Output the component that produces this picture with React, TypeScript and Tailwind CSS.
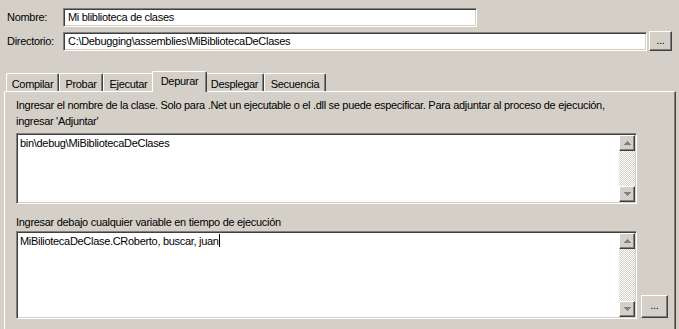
import type { ReactNode } from 'react';

const sunken =
  'border border-t-[#808080] border-l-[#808080] border-r-white border-b-white shadow-[inset_1px_1px_0_#404040,inset_-1px_-1px_0_#d4d0c8]';
const raised =
  'border border-t-white border-l-white border-r-[#404040] border-b-[#404040] shadow-[inset_-1px_-1px_0_#808080]';

function DotsButton({ className }: { className: string }) {
  return (
    <div className={`${raised} ${className} flex items-center justify-center bg-[#d4d0c8] text-[11px] leading-none`}>
      <span className="-mt-[2px]">...</span>
    </div>
  );
}

function Arrow({ up }: { up?: boolean }) {
  return (
    <div className={`${raised} w-[16px] h-[16px] bg-[#d4d0c8] flex items-center justify-center`}>
      <svg width="7" height="4" viewBox="0 0 7 4">
        {up ? (
          <path d="M3 0h1v1h1v1h1v1h1v1H0V3h1V2h1V1h1z" fill="#808080" />
        ) : (
          <path d="M0 0h7v1H6v1H5v1H4v1H3V3H2V2H1V1H0z" fill="#808080" />
        )}
      </svg>
    </div>
  );
}

function TextBox({ className, children }: { className: string; children: ReactNode }) {
  return (
    <div className={`${sunken} ${className} bg-white flex`}>
      <div className="flex-1 pl-[3px] pt-[2px] leading-[14px] whitespace-nowrap">{children}</div>
      <div className="w-[16px] flex flex-col mr-[1px] my-[1px] bg-[repeating-conic-gradient(#d4d0c8_0%_25%,#ffffff_0%_50%)] bg-[length:2px_2px]">
        <Arrow up />
        <div className="flex-1" />
        <Arrow />
      </div>
    </div>
  );
}

const tabs = [
  { label: 'Compilar', w: 'w-[53px]' },
  { label: 'Probar', w: 'w-[44px]' },
  { label: 'Ejecutar', w: 'w-[51px]' },
  { label: 'Depurar', w: 'w-[55px]', active: true },
  { label: 'Desplegar', w: 'w-[59px]' },
  { label: 'Secuencia', w: 'w-[62px]' },
];

export default function App() {
  return (
    <div className="w-[679px] h-[329px] overflow-hidden bg-[#d4d0c8] text-black text-[11px] tracking-[-0.3px] font-['Liberation_Sans',sans-serif]">
      <div className="pl-[7px] pt-[8px] flex flex-col gap-[4px]">
        <div className="flex items-center">
          <span className="w-[56px]">Nombre:</span>
          <div className={`${sunken} w-[414px] h-[19px] bg-white pl-[4px] leading-[16px]`}>Mi bliblioteca de clases</div>
        </div>
        <div className="flex items-center">
          <span className="w-[56px]">Directorio:</span>
          <div className={`${sunken} w-[584px] h-[19px] bg-white pl-[4px] leading-[16px]`}>
            C:\Debugging\assemblies\MiBibliotecaDeClases
          </div>
          <DotsButton className="ml-[2px] w-[23px] h-[20px]" />
        </div>
      </div>

      <div className="mt-[20px] pl-[6px] flex items-end h-[20px] relative z-10">
        {tabs.map((t) =>
          t.active ? (
            <div
              key={t.label}
              className={`${t.w} -mx-[2px] h-[21px] -mb-[1px] bg-[#d4d0c8] border-t border-l border-t-white border-l-white border-r border-r-[#404040] rounded-t-[2px] shadow-[inset_-1px_0_0_#808080] flex justify-center pt-[1px] relative`}
            >
              {t.label}
            </div>
          ) : (
            <div
              key={t.label}
              className={`${t.w} h-[18px] border-t border-l border-t-white border-l-white border-r border-r-[#404040] rounded-t-[2px] shadow-[inset_-1px_0_0_#808080] flex justify-center pt-[2px]`}
            >
              {t.label}
            </div>
          ),
        )}
      </div>

      <div className={`${raised} ml-[4px] w-[672px] h-[245px] pl-[11px] pt-[5px]`}>
        <p className="leading-[16px]">
          Ingresar el nombre de la clase. Solo para .Net un ejecutable o el .dll se puede especificar. Para adjuntar al proceso de ejecución,
          <br />
          ingresar 'Adjuntar'
        </p>
        <TextBox className="mt-[4px] w-[621px] h-[71px]">bin\debug\MiBibliotecaDeClases</TextBox>
        <p className="mt-[10px] leading-[16px]">Ingresar debajo cualquier variable en tiempo de ejecución</p>
        <div className="mt-[1px] flex items-end">
          <TextBox className="w-[621px] h-[88px]">
            MiBiliotecaDeClase.CRoberto, buscar, juan
            <span className="inline-block w-[1px] h-[13px] bg-black align-[-2px]" />
          </TextBox>
          <DotsButton className="ml-[4px] w-[27px] h-[23px] mb-[1px]" />
        </div>
      </div>
    </div>
  );
}
